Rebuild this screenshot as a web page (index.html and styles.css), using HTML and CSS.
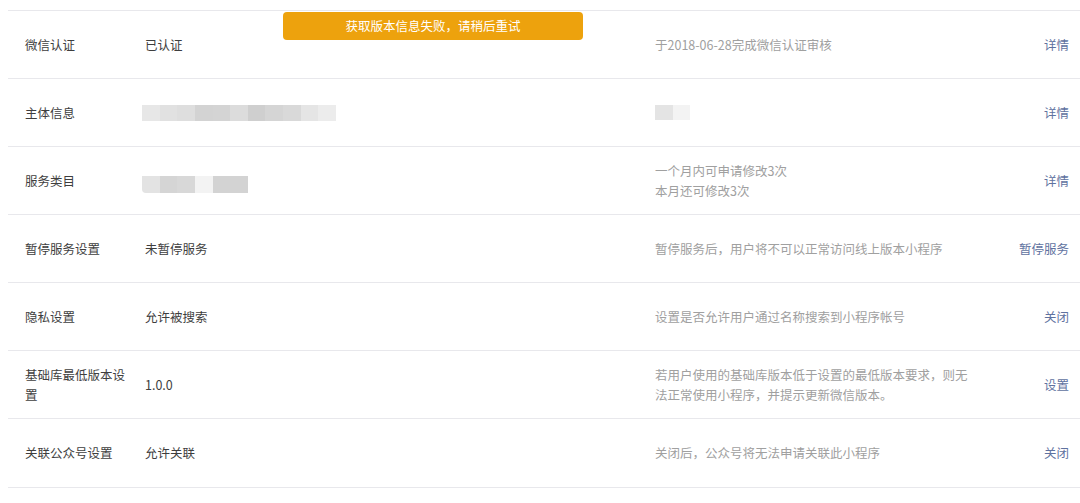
FILE: index.html
```html
<!DOCTYPE html>
<html lang="zh-CN">
<head>
<meta charset="utf-8">
<title>设置</title>
<link rel="stylesheet" href="styles.css">
</head>
<body>
<div class="page">
  <div class="toast">获取版本信息失败，请稍后重试</div>
  <ul class="list">
    <li class="row">
      <div class="label">微信认证</div>
      <div class="value">已认证</div>
      <div class="desc">于2018-06-28完成微信认证审核</div>
      <a class="action">详情</a>
    </li>
    <li class="row">
      <div class="label">主体信息</div>
      <div class="value">
        <div class="mosaic">
          <i style="background:#e7e7e7"></i><i style="background:#e1e1e1"></i><i style="background:#dedede"></i><i style="background:#d3d3d3"></i><i style="background:#d4d4d4"></i><i style="background:#dcdcdc"></i><i style="background:#cfcfcf"></i><i style="background:#d5d5d5"></i><i style="background:#d9d9d9"></i><i style="background:#e5e5e5"></i><i style="background:#ececec"></i>
        </div>
      </div>
      <div class="desc">
        <div class="mosaic small">
          <i style="background:#e4e4e4"></i><i style="background:#f3f3f3"></i>
        </div>
      </div>
      <a class="action">详情</a>
    </li>
    <li class="row">
      <div class="label">服务类目</div>
      <div class="value">
        <div class="mosaic cat">
          <i style="background:#e3e3e3"></i><i style="background:#d5d5d5"></i><i style="background:#d8d8d8"></i><i style="background:#f3f3f3"></i><i class="wide" style="background:#d3d3d3"></i>
        </div>
      </div>
      <div class="desc">一个月内可申请修改3次<br>本月还可修改3次</div>
      <a class="action">详情</a>
    </li>
    <li class="row">
      <div class="label">暂停服务设置</div>
      <div class="value">未暂停服务</div>
      <div class="desc">暂停服务后，用户将不可以正常访问线上版本小程序</div>
      <a class="action">暂停服务</a>
    </li>
    <li class="row">
      <div class="label">隐私设置</div>
      <div class="value">允许被搜索</div>
      <div class="desc">设置是否允许用户通过名称搜索到小程序帐号</div>
      <a class="action">关闭</a>
    </li>
    <li class="row">
      <div class="label">基础库最低版本设置</div>
      <div class="value">1.0.0</div>
      <div class="desc">若用户使用的基础库版本低于设置的最低版本要求，则无法正常使用小程序，并提示更新微信版本。</div>
      <a class="action">设置</a>
    </li>
    <li class="row last">
      <div class="label">关联公众号设置</div>
      <div class="value">允许关联</div>
      <div class="desc">关闭后，公众号将无法申请关联此小程序</div>
      <a class="action">关闭</a>
    </li>
  </ul>
</div>
</body>
</html>
```
FILE: styles.css
```css
html, body {
  margin: 0;
  padding: 0;
  background: #ffffff;
}
body {
  font-family: "Noto Sans CJK SC", "Noto Sans", sans-serif;
  font-size: 12.5px;
  color: #3e3e3e;
}
.page {
  position: relative;
  padding-top: 10px;
}
.toast {
  position: absolute;
  left: 283px;
  top: 12px;
  width: 300px;
  height: 28px;
  line-height: 28px;
  border-radius: 4px;
  background: #eda20d;
  color: #ffffff;
  text-align: center;
  font-size: 12.5px;
}
.list {
  list-style: none;
  margin: 0 0 0 8px;
  padding: 0;
}
.row {
  display: grid;
  grid-template-columns: 120px 510px 330px 1fr;
  align-items: center;
  height: 67px;
  border-top: 1px solid #e8e8ec;
  padding: 0 11px 0 17px;
  line-height: 20px;
}
.row.last {
  height: 68px;
  border-bottom: 1px solid #e8e8ec;
}
.label {
  padding-right: 10px;
}
.desc {
  color: #a0a0a0;
  padding-right: 8px;
}
.action {
  color: #5f72a0;
  text-align: right;
  white-space: nowrap;
  cursor: pointer;
}
.mosaic {
  display: flex;
  height: 16px;
  margin-left: -3px;
  width: 194px;
}
.mosaic i {
  flex: 1;
  display: block;
}
.mosaic.small {
  width: 35px;
  height: 15px;
  margin-left: 0;
}
.mosaic.cat {
  width: 106px;
  height: 17px;
  margin-top: 8px;
  border-bottom-left-radius: 4px;
  overflow: hidden;
}
.mosaic.cat .wide {
  flex: 2;
}
```
